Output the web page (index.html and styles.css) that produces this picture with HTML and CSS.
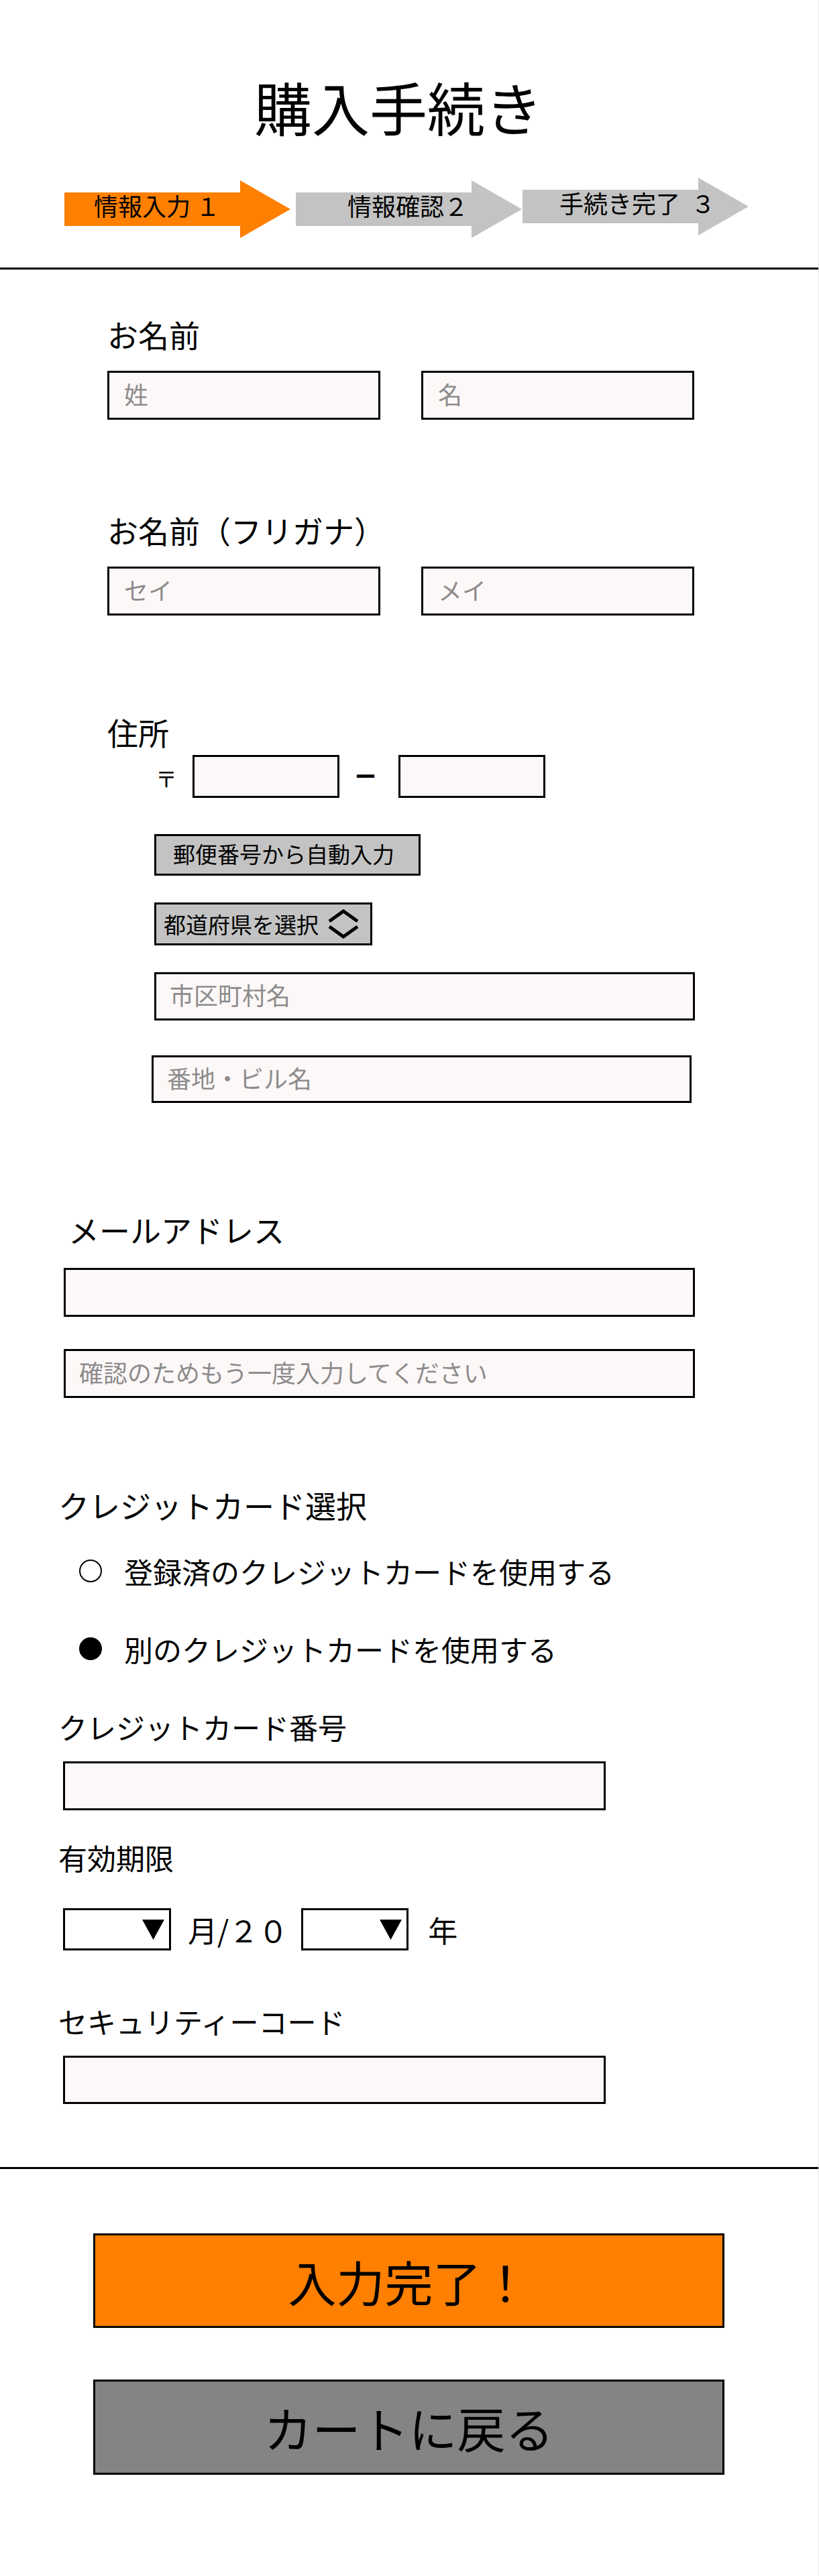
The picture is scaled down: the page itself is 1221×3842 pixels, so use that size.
FILE: index.html
```html
<!DOCTYPE html>
<html lang="ja">
<head>
<meta charset="utf-8">
<title>購入手続き</title>
<link rel="stylesheet" href="styles.css">
</head>
<body>
<div class="page">
  <header class="header">
    <h1 class="title">購入手続き</h1>
    <ol class="steps">
      <li class="step step-active"><span class="step-text step-text-1">情報入力 １</span></li>
      <li class="step step-2"><span class="step-text step-text-2">情報確認２</span></li>
      <li class="step step-3"><span class="step-text step-text-3">手続き完了  ３</span></li>
    </ol>
  </header>
  <hr class="divider">

  <section class="field field-name">
    <h2 class="label">お名前</h2>
    <div class="pair">
      <input class="text-input half" type="text" placeholder="姓">
      <input class="text-input half" type="text" placeholder="名">
    </div>
  </section>

  <section class="field field-kana">
    <h2 class="label">お名前（フリガナ）</h2>
    <div class="pair">
      <input class="text-input half" type="text" placeholder="セイ">
      <input class="text-input half" type="text" placeholder="メイ">
    </div>
  </section>

  <section class="field field-address">
    <h2 class="label">住所</h2>
    <div class="address-body">
      <div class="postal">
        <span class="postal-mark">〒</span>
        <input class="text-input postal-input" type="text">
        <span class="postal-dash">ー</span>
        <input class="text-input postal-input" type="text">
      </div>
      <button type="button" class="gray-btn autofill">郵便番号から自動入力</button>
      <button type="button" class="gray-btn pref-select">
        <span>都道府県を選択</span>
        <svg class="chevrons" width="46" height="44" viewBox="0 0 46 44" aria-hidden="true">
          <polyline points="2,18 23,3 44,18" fill="none" stroke="#000" stroke-width="5"/>
          <polyline points="2,26 23,41 44,26" fill="none" stroke="#000" stroke-width="5"/>
        </svg>
      </button>
      <input class="text-input city" type="text" placeholder="市区町村名">
      <input class="text-input street" type="text" placeholder="番地・ビル名">
    </div>
  </section>

  <section class="field field-mail">
    <h2 class="label mail-label">メールアドレス</h2>
    <input class="text-input wide mail" type="email">
    <input class="text-input wide mail-confirm" type="email" placeholder="確認のためもう一度入力してください">
  </section>

  <section class="field field-credit">
    <h2 class="label">クレジットカード選択</h2>
    <label class="radio radio-first"><span class="radio-mark"></span><span class="radio-text">登録済のクレジットカードを使用する</span></label>
    <label class="radio radio-second"><span class="radio-mark radio-checked"></span><span class="radio-text">別のクレジットカードを使用する</span></label>

    <h2 class="label label-small card-label">クレジットカード番号</h2>
    <input class="text-input card" type="text">

    <h2 class="label label-small expiry-label">有効期限</h2>
    <div class="expiry">
      <button type="button" class="drop"><svg width="33" height="30" viewBox="0 0 33 30" aria-hidden="true"><polygon points="0,0 33,0 16.5,30" fill="#000"/></svg></button>
      <span class="expiry-text">月/２０</span>
      <button type="button" class="drop drop-year"><svg width="33" height="30" viewBox="0 0 33 30" aria-hidden="true"><polygon points="0,0 33,0 16.5,30" fill="#000"/></svg></button>
      <span class="expiry-year">年</span>
    </div>

    <h2 class="label label-small code-label">セキュリティーコード</h2>
    <input class="text-input card code" type="text">
  </section>

  <hr class="divider divider-bottom">

  <div class="actions">
    <button type="button" class="big-btn submit">入力完了！</button>
    <button type="button" class="big-btn back">カートに戻る</button>
  </div>
</div>
</body>
</html>
```

FILE: styles.css
```css
* {
  box-sizing: border-box;
}

html, body {
  margin: 0;
  padding: 0;
  background: #fff;
}

body {
  font-family: "Noto Sans CJK JP", "Noto Sans", sans-serif;
  color: #000;
}

.page {
  width: 1221px;
  min-height: 3842px;
  border-right: 1px solid #e6e6e6;
}

/* header */
.header {
  padding-top: 116px;
}

.title {
  margin: 0;
  padding-left: 379px;
  font-size: 86px;
  line-height: 86px;
  font-weight: 400;
}

.steps {
  list-style: none;
  margin: 67px 0 0 0;
  padding: 0 0 0 96px;
  display: flex;
  align-items: flex-start;
  height: 86px;
}

.step {
  width: 337px;
  height: 86px;
  background: #c3c3c3;
  clip-path: polygon(0 18px, 262px 18px, 262px 0, 337px 43px, 262px 86px, 262px 68px, 0 68px);
  padding-top: 19px;
}

.step-active {
  background: #ff7f00;
}

.step-2 {
  margin-left: 8px;
}

.step-3 {
  margin-left: 1px;
  margin-top: -4px;
}

.step-text {
  display: block;
  font-size: 36px;
  line-height: 36px;
  white-space: pre;
}

.step-text-1 {
  padding-left: 44px;
}

.step-text-2 {
  padding-left: 77px;
}

.step-text-3 {
  padding-left: 55px;
}

.divider {
  margin: 44px 0 0 0;
  border: 0;
  height: 3px;
  width: 1220px;
  background: #000;
}

.divider-bottom {
  margin-top: 94px;
}

/* fields */
.label {
  margin: 0;
  font-size: 46px;
  line-height: 46px;
  font-weight: 400;
}

.label-small {
  font-size: 43px;
}

.text-input {
  display: block;
  border: 3px solid #000;
  background: #fdf8f8;
  font-family: inherit;
  font-size: 36px;
  color: #000;
  padding: 0 0 6px 20px;
  margin: 0;
  border-radius: 0;
  outline: none;
}

.text-input::placeholder {
  color: #8c8c8c;
  opacity: 1;
}

.field-name {
  margin-top: 73px;
  padding-left: 160px;
}

.field-kana {
  margin-top: 141px;
  padding-left: 160px;
}

.pair {
  margin-top: 32px;
  display: flex;
  gap: 61px;
}

.half {
  width: 407px;
  height: 73px;
  padding-left: 22px;
}

/* address */
.field-address {
  margin-top: 150px;
  padding-left: 160px;
}

.address-body {
  padding-left: 70px;
}

.postal {
  margin-top: 12px;
  display: flex;
  align-items: center;
  height: 64px;
}

.postal-mark {
  margin-left: 2px;
  width: 32px;
  font-size: 32px;
  line-height: 32px;
  padding-top: 4px;
}

.postal-input {
  width: 219px;
  height: 64px;
  margin-left: 23px;
}

.postal-dash {
  font-size: 32px;
  line-height: 32px;
  font-weight: 700;
  margin-left: 23px;
  width: 32px;
  padding-bottom: 4px;
}

.postal-dash + .postal-input {
  margin-left: 33px;
}

.gray-btn {
  display: flex;
  align-items: center;
  background: #c3c3c3;
  border: 3px solid #000;
  border-radius: 0;
  font-family: inherit;
  font-size: 33px;
  line-height: 33px;
  color: #000;
  margin: 0;
  text-align: left;
}

.autofill {
  margin-top: 54px;
  width: 397px;
  height: 62px;
  padding: 0 0 4px 25px;
}

.pref-select {
  margin-top: 40px;
  width: 325px;
  height: 64px;
  padding: 0 0 0 11px;
}

.chevrons {
  margin-left: 14px;
  flex: none;
}

.city {
  margin-top: 40px;
  width: 806px;
  height: 72px;
}

.street {
  margin-top: 52px;
  margin-left: -4px;
  width: 805px;
  height: 71px;
}

/* mail */
.field-mail {
  margin-top: 165px;
  padding-left: 95px;
}

.mail-label {
  padding-left: 7px;
}

.wide {
  width: 941px;
  height: 73px;
}

.mail {
  margin-top: 35px;
}

.mail-confirm {
  margin-top: 48px;
}

/* credit */
.field-credit {
  margin-top: 136px;
  padding-left: 87px;
}

.radio {
  display: flex;
  align-items: center;
  height: 46px;
  font-size: 43px;
  line-height: 46px;
}

.radio-first {
  margin-top: 53px;
}

.radio-second {
  margin-top: 70px;
}

.radio-mark {
  flex: none;
  width: 34px;
  height: 34px;
  border: 2.5px solid #000;
  border-radius: 50%;
  margin-left: 31px;
  margin-right: 33px;
}

.radio-checked {
  background: #000;
}

.card-label {
  margin-top: 70px;
}

.card {
  margin-top: 29px;
  margin-left: 7px;
  width: 809px;
  height: 73px;
}

.code-label {
  margin-top: 82px;
}

.code {
  height: 72px;
}

.expiry-label {
  margin-top: 47px;
}

.expiry {
  margin-top: 53px;
  margin-left: 7px;
  display: flex;
  align-items: center;
  height: 63px;
}

.drop {
  display: flex;
  align-items: center;
  justify-content: flex-end;
  width: 161px;
  height: 63px;
  border: 3px solid #000;
  border-radius: 0;
  background: #fff;
  padding: 0 7px 0 0;
  margin: 0;
}

.drop-year {
  width: 160px;
}

.expiry-text {
  font-size: 44px;
  line-height: 44px;
  margin-left: 25px;
  margin-right: 20px;
}

.expiry-year {
  font-size: 44px;
  line-height: 44px;
  margin-left: 29px;
}

/* actions */
.actions {
  padding-left: 139px;
}

.big-btn {
  display: block;
  width: 941px;
  border: 3px solid #000;
  border-radius: 0;
  font-family: inherit;
  font-size: 72px;
  line-height: 72px;
  color: #000;
  text-align: center;
  padding: 0;
  margin: 0;
}

.submit {
  margin-top: 96px;
  height: 141px;
  background: #ff7f00;
}

.back {
  margin-top: 77px;
  height: 142px;
  background: #848484;
}
```
